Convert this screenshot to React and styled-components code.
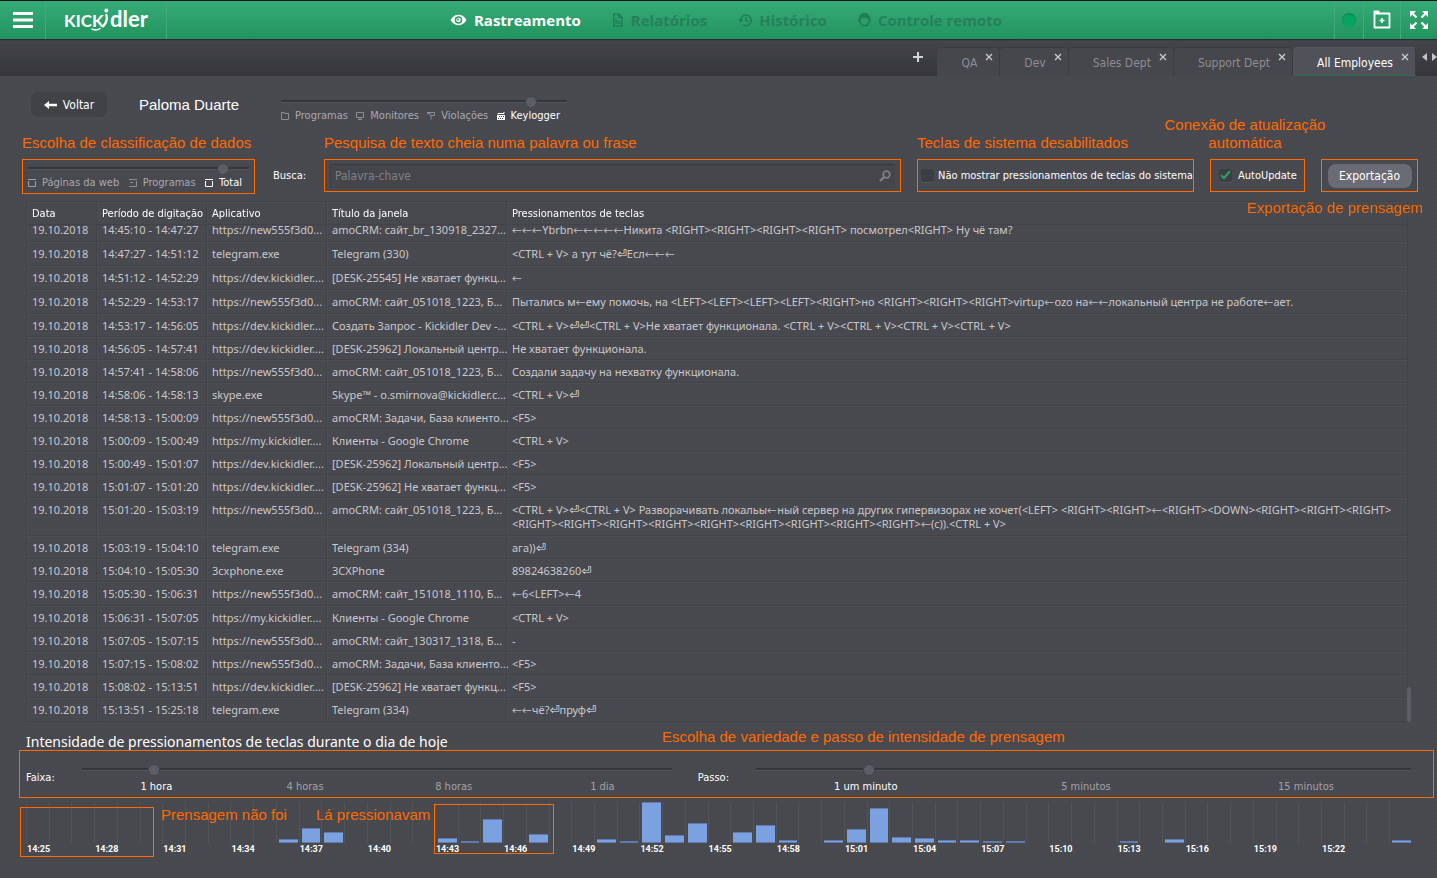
import React, { useLayoutEffect, useRef } from 'react'
import styled, { createGlobalStyle } from 'styled-components'

const orange = '#ff6a00'
const uiFont = '"DejaVu Sans Condensed", "Noto Sans", sans-serif'
const stripes = 'linear-gradient(135deg, #4a4a51 25%, #47474e 25% 50%, #4a4a51 50% 75%, #47474e 75%) 0 0 / 4px 4px'

const rows = [
    ['14:45:10 - 14:47:27', 'https://new555f3d0...', 'amoCRM: сайт_br_130918_2327...', '←←←Ybrbn←←←←←Никита <RIGHT><RIGHT><RIGHT><RIGHT> посмотрел<RIGHT> Ну чё там?'],
    ['14:47:27 - 14:51:12', 'telegram.exe', 'Telegram (330)', '<CTRL + V> а тут чё?⏎Есл←←←'],
    ['14:51:12 - 14:52:29', 'https://dev.kickidler....', '[DESK-25545] Не хватает функц...', '←'],
    ['14:52:29 - 14:53:17', 'https://new555f3d0...', 'amoCRM: сайт_051018_1223, Б...', 'Пытались м←ему помочь, на <LEFT><LEFT><LEFT><LEFT><RIGHT>но <RIGHT><RIGHT><RIGHT>virtup←ozo на←←локальный центра не работе←ает.'],
    ['14:53:17 - 14:56:05', 'https://dev.kickidler....', 'Создать Запрос - Kickidler Dev -...', '<CTRL + V>⏎⏎<CTRL + V>Не хватает функционала. <CTRL + V><CTRL + V><CTRL + V><CTRL + V>'],
    ['14:56:05 - 14:57:41', 'https://dev.kickidler....', '[DESK-25962] Локальный центр...', 'Не хватает функционала.'],
    ['14:57:41 - 14:58:06', 'https://new555f3d0...', 'amoCRM: сайт_051018_1223, Б...', 'Создали задачу на нехватку функционала.'],
    ['14:58:06 - 14:58:13', 'skype.exe', 'Skype™ - o.smirnova@kickidler.c...', '<CTRL + V>⏎'],
    ['14:58:13 - 15:00:09', 'https://new555f3d0...', 'amoCRM: Задачи, База клиенто...', '<F5>'],
    ['15:00:09 - 15:00:49', 'https://my.kickidler....', 'Клиенты - Google Chrome', '<CTRL + V>'],
    ['15:00:49 - 15:01:07', 'https://dev.kickidler....', '[DESK-25962] Локальный центр...', '<F5>'],
    ['15:01:07 - 15:01:20', 'https://dev.kickidler....', '[DESK-25962] Не хватает функц...', '<F5>'],
    ['15:01:20 - 15:03:19', 'https://new555f3d0...', 'amoCRM: сайт_051018_1223, Б...', '<CTRL + V>⏎<CTRL + V> Разворачивать локальы←ный сервер на других гипервизорах не хочет(<LEFT> <RIGHT><RIGHT>←<RIGHT><DOWN><RIGHT><RIGHT><RIGHT>\n<RIGHT><RIGHT><RIGHT><RIGHT><RIGHT><RIGHT><RIGHT><RIGHT><RIGHT>←(c)).<CTRL + V>'],
    ['15:03:19 - 15:04:10', 'telegram.exe', 'Telegram (334)', 'ага))⏎'],
    ['15:04:10 - 15:05:30', '3cxphone.exe', '3CXPhone', '89824638260⏎'],
    ['15:05:30 - 15:06:31', 'https://new555f3d0...', 'amoCRM: сайт_151018_1110, Б...', '←6<LEFT>←4'],
    ['15:06:31 - 15:07:05', 'https://my.kickidler....', 'Клиенты - Google Chrome', '<CTRL + V>'],
    ['15:07:05 - 15:07:15', 'https://new555f3d0...', 'amoCRM: сайт_130317_1318, Б...', '-'],
    ['15:07:15 - 15:08:02', 'https://new555f3d0...', 'amoCRM: Задачи, База клиенто...', '<F5>'],
    ['15:08:02 - 15:13:51', 'https://dev.kickidler....', '[DESK-25962] Не хватает функц...', '<F5>'],
    ['15:13:51 - 15:25:18', 'telegram.exe', 'Telegram (334)', '←←чё?⏎пруф⏎'],
]

// minute offset from 14:25 -> bar height
const bars = {
    11: 4, 12: 15, 13: 11, 18: 5, 19: 1, 20: 24, 22: 9, 25: 4, 26: 1, 27: 41,
    28: 8, 29: 20, 31: 11, 32: 18, 33: 3, 35: 3, 36: 14, 37: 35, 38: 6, 39: 5,
    40: 3, 41: 3, 42: 2, 43: 1, 48: 2, 50: 4, 60: 3,
}

const timeAt = (i) => {
    const total = 14 * 60 + 25 + i
    return `${Math.floor(total / 60)}:${String(total % 60).padStart(2, '0')}`
}

function Keys({ text }) {
    return text
        .split(/([←⏎]+)/)
        .map((part, i) => (i % 2 ? <Key key={i} $enter={part[0] === '⏎'}>{part}</Key> : part))
}

function KeyLog() {
    const scroller = useRef(null)
    useLayoutEffect(() => {
        scroller.current.scrollTop = scroller.current.scrollHeight
    }, [])
    return (
        <LogPanel>
            <LogScroller ref={scroller}>
                <LogTable>
                    <colgroup>
                        <Col $w={70} />
                        <Col $w={110} />
                        <Col $w={120} />
                        <Col $w={180} />
                        <col />
                    </colgroup>
                    <thead>
                        <tr>
                            <Th>Data</Th>
                            <Th>Período de digitação</Th>
                            <Th>Aplicativo</Th>
                            <Th>Título da janela</Th>
                            <Th>Pressionamentos de teclas</Th>
                        </tr>
                    </thead>
                    <tbody>
                        {rows.map(([period, app, title, keys]) => (
                            <Row key={period} $tall={keys.includes('←')}>
                                <td>19.10.2018</td>
                                <td>{period}</td>
                                <td>{app}</td>
                                <td>{title}</td>
                                <td><Keys text={keys} /></td>
                            </Row>
                        ))}
                    </tbody>
                </LogTable>
            </LogScroller>
            <ScrollThumb />
        </LogPanel>
    )
}

function Tab({ label, active }) {
    return (
        <TabItem $active={active}>
            <TabButton type="button" $active={active}>{label}</TabButton>
            <TabClose type="button" aria-label={`Fechar ${label}`}>
                <svg width="8" height="8" viewBox="0 0 8 8" stroke="#d0d0d2" strokeWidth="1.2">
                    <path d="M1 1l6 6M7 1L1 7" />
                </svg>
            </TabClose>
        </TabItem>
    )
}

const EyeIcon = () => (
    <svg width="17" height="12" viewBox="0 0 17 12">
        <path d="M.5 6C3 2 5.600.8 8.500.8S14 2 16.500 6C14 10 11.400 11.200 8.500 11.200S3 10 .5 6z" fill="#fff" />
        <circle cx="8.5" cy="6" r="3.8" fill="#2a9c6a" />
        <circle cx="8.5" cy="6" r="2.300" fill="#fff" />
        <circle cx="8" cy="5.500" r="1" fill="#2a9c6a" />
    </svg>
)

const ReportIcon = () => (
    <svg width="12" height="14" viewBox="0 0 12 14" fill="none" stroke="#1f7f56" strokeWidth="1.4">
        <path d="M1.700 1h5l3.300 3.300V13H1.700zM6.500 1v3.500H10" />
        <path d="M4 5v6M6 7v4M8 8v3" strokeWidth="1.2" />
    </svg>
)

const HistoryIcon = () => (
    <svg width="14" height="14" viewBox="0 0 14 14" fill="none" stroke="#1f7f56" strokeWidth="1.5">
        <path d="M2.600 7.500A5.300 5.300 0 1 1 5 11.800" />
        <path d="M8 4v3.500l2.300 1.300" />
        <path d="M0 6.500h5.200L2.600 9.800z" fill="#1f7f56" stroke="none" />
    </svg>
)

const OperatorIcon = () => (
    <svg width="13" height="14" viewBox="0 0 13 14" fill="none" stroke="#1f7f56" strokeWidth="1.4">
        <path d="M2 8V5.500a4.500 4.500 0 0 1 9 0V8c0 2.500-2 4.700-4.500 4.700S2 10.500 2 8z" />
        <path d="M2 5c2 0 3.500-.4 4.500-1C7.500 4.600 9 5 11 5V3.500L8.500 1h-4L2 3.500z" fill="#1f7f56" />
        <path d="M1 5.500v4M12 5.500v4M11 11l-3 2.300" />
    </svg>
)

const Logo = () => (
    <svg width="88" height="32" viewBox="0 0 88 32" role="img" aria-label="Kickidler">
        <LogoText x="0" y="23" fontSize="17">KICK</LogoText>
        <LogoText x="46" y="23" fontSize="22">dler</LogoText>
        <g fill="none" stroke="#fff" strokeLinecap="round">
            <circle cx="42.300" cy="6.500" r="2" fill="#fff" stroke="none" />
            <path d="M42.300 11c1.200 3.500 0 8-3.300 11.500" strokeWidth="2.300" />
            <path d="M36 24.500c-2 1.600-5 1.900-8 .6" strokeWidth="1.500" />
        </g>
    </svg>
)

const ModeIcon = ({ kind, color }) => (
    <svg width="8" height="8" viewBox="0 0 8 8" fill="none" stroke={color} strokeWidth="1">
        {kind === 'folder' && <path d="M.5 7.500V.5h3v1h4v6z" />}
        {kind === 'monitor' && <path d="M.5.5h7v5h-7zM4 5.500v2M2 7.500h4" />}
        {kind === 'alert' && <path d="M0 .5h7.500v3H4V7.500M0 1.500h3v2" />}
        {kind === 'keyboard' && (
            <>
                <path d="M1 2.500V1.500h6V0" />
                <path d="M0 3h8v5H0z" fill={color} stroke="none" />
                <path d="M2 4.500h1M4 4.500h1M6 4.500h1M1 6.500h1M3 6.500h1M5 6.500h1" stroke="#48484f" />
            </>
        )}
        {kind === 'box' && <path d="M0 .5h8M.5 2v5.500h7V2" />}
        {kind === 'half' && <path d="M0 .5h8M1 3.500h3M0 7.500h7.500V2" />}
    </svg>
)

function App() {
    return (
        <Page>
            <GlobalStyle />
            <Header>
                <HeaderButton type="button" aria-label="Menu" $w={45}>
                    <svg width="20" height="18" viewBox="0 0 20 18" fill="#fff">
                        <path d="M0 1h20v3H0zM0 7.500h20v3H0zM0 14h20v3H0z" />
                    </svg>
                </HeaderButton>
                <LogoCell><Logo /></LogoCell>
                <Nav>
                    <NavLink href="#tracking" $active><EyeIcon />Rastreamento</NavLink>
                    <NavLink href="#reports"><ReportIcon />Relatórios</NavLink>
                    <NavLink href="#history"><HistoryIcon />Histórico</NavLink>
                    <NavLink href="#remote"><OperatorIcon />Controle remoto</NavLink>
                </Nav>
                <HeaderButton type="button" aria-label="Status" $w={29} $line><StatusDot /></HeaderButton>
                <HeaderButton type="button" aria-label="Adicionar" $w={37} $line>
                    <svg width="18" height="20" viewBox="0 0 18 20" fill="none" stroke="#fff">
                        <path d="M1.500 3.500h15v14h-15z" strokeWidth="1.800" strokeLinejoin="round" />
                        <path d="M1 3V1h5v2" fill="#fff" strokeWidth="1" />
                        <path d="M9 8v5M6.500 10.500h5" strokeWidth="1.500" />
                    </svg>
                </HeaderButton>
                <HeaderButton type="button" aria-label="Tela cheia" $w={37} $line>
                    <svg width="18" height="18" viewBox="0 0 18 18" fill="#fff" stroke="#fff" strokeWidth="2.200">
                        <path d="M2 2l4.500 4.500M16 2l-4.500 4.500M2 16l4.500-4.500M16 16l-4.500-4.500" />
                        <path d="M0 0h6L0 6zM18 0h-6l6 6zM0 18h6l-6-6zM18 18h-6l6-6z" stroke="none" />
                    </svg>
                </HeaderButton>
            </Header>
            <TabBar>
                <AddTab type="button" aria-label="Nova aba">
                    <svg width="10" height="10" viewBox="0 0 10 10" stroke="#d4d4d6" strokeWidth="2">
                        <path d="M5 0v10M0 5h10" />
                    </svg>
                </AddTab>
                <Tab label="QA" />
                <Tab label="Dev" />
                <Tab label="Sales Dept" />
                <Tab label="Support Dept" />
                <Tab label="All Employees" active />
                <TabArrows type="button" aria-label="Rolar abas">
                    <svg width="15" height="8" viewBox="0 0 15 8" fill="#c4c4c8">
                        <path d="M5 0v8L0 4zM10 0v8l5-4z" />
                    </svg>
                </TabArrows>
            </TabBar>
            <Content>
                <PersonBar>
                    <BackButton type="button">
                        <svg width="13" height="8" viewBox="0 0 13 8" fill="#fff">
                            <path d="M0 4l5-4v2.700h8v2.600H5V8z" />
                        </svg>
                        Voltar
                    </BackButton>
                    <PersonName>Paloma Duarte</PersonName>
                    <ModeSlider>
                        <Range aria-label="Modo" max="1000" defaultValue="891" />
                        <Modes>
                            <Mode><ModeIcon kind="folder" color="#8c8d92" />Programas</Mode>
                            <Mode><ModeIcon kind="monitor" color="#8c8d92" />Monitores</Mode>
                            <Mode><ModeIcon kind="alert" color="#8c8d92" />Violações</Mode>
                            <Mode $active><ModeIcon kind="keyboard" color="#fff" />Keylogger</Mode>
                        </Modes>
                    </ModeSlider>
                </PersonBar>
                <FilterBar>
                    <Framed $w={233} $tall>
                        <FilterSlider>
                            <Range aria-label="Classificação" max="1000" defaultValue="904" />
                            <Modes>
                                <Mode><ModeIcon kind="box" color="#a0a0a4" />Páginas da web</Mode>
                                <Mode><ModeIcon kind="half" color="#8c8d92" />Programas</Mode>
                                <Mode $active><ModeIcon kind="box" color="#fff" />Total</Mode>
                            </Modes>
                        </FilterSlider>
                        <Note $side="above">Escolha de classificação de dados</Note>
                    </Framed>
                    <SearchGroup>
                        <SearchLabel htmlFor="search">Busca:</SearchLabel>
                        <Framed $grow>
                            <SearchBox>
                                <SearchInput id="search" type="text" placeholder="Palavra-chave" />
                                <svg width="12" height="12" viewBox="0 0 12 12" fill="none" stroke="#7e7f85">
                                    <circle cx="7.500" cy="4.500" r="3.300" strokeWidth="1.800" />
                                    <path d="M5 7L1 11" strokeWidth="2.400" />
                                </svg>
                            </SearchBox>
                            <Note $side="above">Pesquisa de texto cheia numa palavra ou frase</Note>
                        </Framed>
                    </SearchGroup>
                    <Framed $w={277}>
                        <CheckLabel>
                            <Checkbox />
                            Não mostrar pressionamentos de teclas do sistema
                        </CheckLabel>
                        <Note $side="above">Teclas de sistema desabilitados</Note>
                    </Framed>
                    <Framed $w={95}>
                        <CheckLabel $roomy>
                            <Checkbox defaultChecked />
                            AutoUpdate
                        </CheckLabel>
                        <CenteredNote $side="above">Conexão de atualização automática</CenteredNote>
                    </Framed>
                    <Framed $w={97}>
                        <ExportButton type="button">Exportação</ExportButton>
                        <Note $side="below">Exportação de prensagem</Note>
                    </Framed>
                </FilterBar>
                <KeyLog />
                <ChartTitle>Intensidade de pressionamentos de teclas durante o dia de hoje</ChartTitle>
                <RangeBar>
                    <RangeLabel htmlFor="span">Faixa:</RangeLabel>
                    <RangeGroup $grow={9}>
                        <Range id="span" max="1000" defaultValue="114" />
                        <Steps>
                            <Step $active>1 hora</Step>
                            <Step>4 horas</Step>
                            <Step>8 horas</Step>
                            <Step>1 dia</Step>
                        </Steps>
                    </RangeGroup>
                    <RangeLabel htmlFor="step" $second>Passo:</RangeLabel>
                    <RangeGroup $grow={10}>
                        <Range id="step" max="1000" defaultValue="166" />
                        <Steps>
                            <Step $active>1 um minuto</Step>
                            <Step>5 minutos</Step>
                            <Step>15 minutos</Step>
                        </Steps>
                    </RangeGroup>
                    <RangeNote $side="above">Escolha de variedade e passo de intensidade de prensagem</RangeNote>
                </RangeBar>
                <Chart>
                    {Array.from({ length: 61 }, (_, i) => (
                        <Slot key={i}>
                            <Track>{bars[i] && <Bar style={{ height: bars[i] }} />}</Track>
                            {i % 3 === 0 && i < 60 && <Time>{timeAt(i)}</Time>}
                        </Slot>
                    ))}
                    <ChartFrame $x={-6} $y={5} $w={134} />
                    <ChartNote $x={135}>Prensagem não foi</ChartNote>
                    <ChartNote $x={290}>Lá pressionavam</ChartNote>
                    <ChartFrame $x={408} $y={2} $w={120} />
                </Chart>
            </Content>
        </Page>
    )
}

const GlobalStyle = createGlobalStyle`
    body {
        margin: 0;
        background: #48484f;
    }
    *, *::before, *::after {
        box-sizing: border-box;
    }
    button {
        border: 0;
        padding: 0;
        background: none;
        font: inherit;
        color: inherit;
        cursor: pointer;
    }
    svg {
        flex: none;
        display: block;
    }
`

const Page = styled.div`
    display: flex;
    flex-direction: column;
    height: 100vh;
    min-height: 600px;
    overflow: hidden;
    background: ${stripes};
    color: #c9c9cc;
    font: 11px/14px ${uiFont};
`

const Header = styled.header`
    display: flex;
    height: 39px;
    flex: none;
    border-top: 1px solid #111214;
    background: linear-gradient(#37ab77, #21935f);
    box-shadow: 0 1px 1px #2c2d31;
    z-index: 1;
`

const HeaderButton = styled.button`
    display: flex;
    align-items: center;
    justify-content: center;
    width: ${(p) => p.$w}px;
    border-left: ${(p) => (p.$line ? '1px solid #41a97b' : '0')};
`

const LogoCell = styled.div`
    display: flex;
    align-items: center;
    width: 122px;
    padding-left: 18px;
    border: solid #41a97b;
    border-width: 0 1px;
`

const LogoText = styled.text`
    fill: #fff;
    font-family: Lato, sans-serif;
    font-weight: bold;
`

const Nav = styled.nav`
    display: flex;
    flex: 1;
    align-items: center;
    justify-content: center;
    gap: 31px;
    padding-right: 49px;
`

const NavLink = styled.a`
    display: flex;
    align-items: center;
    gap: 7px;
    font: bold 15px/20px "Open Sans", sans-serif;
    text-decoration: none;
    white-space: nowrap;
    color: ${(p) => (p.$active ? '#fff' : '#27805a')};
`

const StatusDot = styled.span`
    width: 14px;
    height: 14px;
    border-radius: 50%;
    background: #08a562;
    box-shadow: inset 0 1px 2px #08804c;
`

const TabBar = styled.div`
    display: flex;
    flex: none;
    align-items: flex-end;
    justify-content: flex-end;
    height: 37px;
    background: linear-gradient(#45464b, #35353a);
`

const AddTab = styled.button`
    padding: 0 14px 14px;
`

const TabItem = styled.div`
    position: relative;
    height: 29px;
    border-right: 1px solid #3c3d42;
    border-top: 1px solid ${(p) => (p.$active ? '#56575e' : '#3b3c41')};
    border-bottom: ${(p) => (p.$active ? '1px solid #2d6d52' : '0')};
    border-radius: 4px 4px 0 0;
    background: ${(p) => (p.$active ? '#505159' : '#46464d')};
`

const TabButton = styled.button`
    padding: 8px 22px 6px 24px;
    font-size: 12px;
    color: ${(p) => (p.$active ? '#fff' : '#8d8d92')};
`

const TabClose = styled.button`
    position: absolute;
    top: 5px;
    right: 6px;
`

const TabArrows = styled.button`
    padding: 0 0 15px 6px;
`

const Content = styled.main`
    display: flex;
    flex: 1;
    flex-direction: column;
    min-height: 0;
`

const PersonBar = styled.div`
    display: flex;
    height: 46px;
    flex: none;
    align-items: flex-start;
    padding: 16px 31px 0;
`

const BackButton = styled.button`
    display: flex;
    align-items: center;
    justify-content: center;
    gap: 6px;
    width: 76px;
    height: 25px;
    border-radius: 7px;
    background: #414246;
    color: #fff;
    font-size: 12px;
`

const PersonName = styled.h1`
    width: 142px;
    margin: 0 0 0 32px;
    font: 15px/25px "Liberation Sans", Arial, sans-serif;
    color: #fff;
    white-space: nowrap;
`

const ModeSlider = styled.div`
    width: 286px;
    padding-top: 4px;
`

const FilterSlider = styled.div`
    width: 221px;
    padding-top: 3px;
`

const Range = styled.input.attrs({ type: 'range' })`
    display: block;
    appearance: none;
    width: 100%;
    height: 12px;
    margin: 0;
    background: linear-gradient(#35363a, #35363a 2px, #55565c 2px) 0 4px / 100% 3px no-repeat;

    &::-webkit-slider-thumb {
        appearance: none;
        width: 12px;
        height: 12px;
        border: 1px solid #45464b;
        border-radius: 50%;
        background: #5d5e65;
    }
`

const Modes = styled.div`
    display: flex;
    justify-content: space-between;
    padding: 1px 7px 0 0;
`

const Mode = styled.span`
    display: flex;
    align-items: center;
    gap: 6px;
    white-space: nowrap;
    color: ${(p) => (p.$active ? '#fff' : '#a9a9ad')};
`

const FilterBar = styled.div`
    display: flex;
    flex: none;
    gap: 16px;
    height: 35px;
    margin: 37px 19px 7px 22px;
    color: #fff;
`

const Framed = styled.div`
    position: relative;
    display: flex;
    align-items: ${(p) => (p.$tall ? 'flex-start' : 'center')};
    justify-content: center;
    flex: ${(p) => (p.$grow ? '1' : 'none')};
    width: ${(p) => (p.$w ? `${p.$w}px` : 'auto')};
    height: ${(p) => (p.$tall ? 35 : 33)}px;
    border: 1px solid ${orange};
`

const Note = styled.span`
    position: absolute;
    ${(p) => (p.$side === 'above' ? 'bottom: calc(100% + 8px); left: -1px;' : 'top: calc(100% + 8px); right: -6px;')}
    font: 15px/18px "Liberation Sans", Arial, sans-serif;
    color: ${orange};
    white-space: nowrap;
    pointer-events: none;
    z-index: 3;
`

const CenteredNote = styled(Note)`
    left: -48px;
    width: 164px;
    text-align: center;
    white-space: normal;
`

const RangeNote = styled(Note)`
    left: 642px;
    bottom: calc(100% + 5px);
`

const SearchGroup = styled.div`
    display: flex;
    flex: 1;
`

const SearchLabel = styled.label`
    width: 53px;
    padding-left: 2px;
    line-height: 34px;
`

const SearchBox = styled.div`
    display: flex;
    flex: 1;
    align-items: center;
    height: 24px;
    margin: 0 5px;
    padding-right: 4px;
    border-top: 1px solid #38393d;
    border-left: 1px solid #404146;
    background: #45454b;
`

const SearchInput = styled.input`
    flex: 1;
    min-width: 0;
    padding: 0 4px;
    border: 0;
    background: none;
    font: 12px/14px ${uiFont};
    color: #fff;

    &::placeholder {
        color: #808186;
    }
`

const CheckLabel = styled.label`
    display: flex;
    flex: 1;
    align-items: center;
    gap: ${(p) => (p.$roomy ? 6 : 4)}px;
    padding-left: ${(p) => (p.$roomy ? 8 : 3)}px;
    white-space: nowrap;
`

const Checkbox = styled.input.attrs({ type: 'checkbox' })`
    appearance: none;
    position: relative;
    flex: none;
    width: 13px;
    height: 13px;
    margin: 0;
    border-radius: 3px;
    background: #3d3e43;
    box-shadow: 0 1px 0 #55565c;

    &:checked::after {
        content: '';
        position: absolute;
        top: 0;
        left: 4px;
        width: 5px;
        height: 10px;
        border: solid #25a56c;
        border-width: 0 2px 2px 0;
        transform: rotate(42deg);
    }
`

const ExportButton = styled.button`
    width: 84px;
    height: 24px;
    border-radius: 8px;
    background: #6a6b74;
    font-size: 12px;
`

const LogPanel = styled.section`
    position: relative;
    flex: 1;
    min-height: 0;
    margin: 0 25px 9px 26px;
`

const LogScroller = styled.div`
    height: 100%;
    overflow-y: auto;
    scrollbar-width: none;
`

const LogTable = styled.table`
    width: calc(100% - 4px);
    table-layout: fixed;
    border-spacing: 0;
    border-right: 1px solid #424349;

    td, th {
        padding: 5px 0 3px 5px;
        border-left: 1px solid #424349;
        border-bottom: 1px solid #424349;
        box-shadow: inset 1px 1px 0 #4e4e55;
        text-align: left;
        vertical-align: top;
        font: 11px/14px "Noto Sans", sans-serif;
        white-space: pre;
    }

    th {
        font-family: ${uiFont};
    }
`

const Col = styled.col`
    width: ${(p) => p.$w}px;
`

const Th = styled.th`
    position: sticky;
    top: 0;
    z-index: 1;
    border-top: 1px solid #424349;
    background: ${stripes};
    color: #fff;
`

const Row = styled.tr`
    && td {
        padding-bottom: ${(p) => (p.$tall ? 4 : 3)}px;
    }
`

const Key = styled.span`
    font-family: "DejaVu Sans", sans-serif;
    font-size: 12px;
    line-height: 1;
    color: ${(p) => (p.$enter ? '#f0f0f2' : '#b0b0b4')};
`

const ScrollThumb = styled.div`
    position: absolute;
    right: 1px;
    bottom: 0;
    width: 4px;
    height: 35px;
    border-radius: 2px;
    background: #5d5e65;
`

const ChartTitle = styled.h2`
    flex: none;
    height: 19px;
    margin: 0 26px;
    font: 14px/21px "Noto Sans", sans-serif;
    color: #fff;
`

const RangeBar = styled.div`
    position: relative;
    display: flex;
    flex: none;
    height: 48px;
    margin: 0 3px 4px 19px;
    padding: 13px 22px 0 6px;
    border: 1px solid ${orange};
`

const RangeLabel = styled.label`
    flex: none;
    width: ${(p) => (p.$second ? 84 : 56)}px;
    padding-left: ${(p) => (p.$second ? 26 : 0)}px;
    padding-top: 7px;
    color: #fff;
`

const RangeGroup = styled.div`
    flex: ${(p) => p.$grow} 1 0;
`

const Steps = styled.div`
    display: flex;
    margin-right: -5px;
    padding-top: 4px;
`

const Step = styled.span`
    flex: 1;
    text-align: center;
    color: ${(p) => (p.$active ? '#fff' : '#a3a3a7')};
`

const Chart = styled.div`
    position: relative;
    display: flex;
    flex: none;
    height: 76px;
    margin: 0 25px 0 26px;
`

const Slot = styled.div`
    flex: 1 1 0;
    min-width: 0;
`

const Track = styled.div`
    display: flex;
    align-items: flex-end;
    height: 41px;
    padding: 0 1px 0 2px;
    border-left: 1px solid #525259;
`

const Bar = styled.div`
    flex: 1;
    border: solid #5f7aab;
    border-width: 1px 0;
    background: #7ba1e1;
`

const Time = styled.div`
    padding-left: 1px;
    font: bold 9px/12px Roboto, sans-serif;
    color: #fff;
    white-space: nowrap;
`

const ChartFrame = styled.div`
    position: absolute;
    left: ${(p) => p.$x}px;
    top: ${(p) => p.$y}px;
    width: ${(p) => p.$w}px;
    height: 50px;
    border: 1px solid ${orange};
    pointer-events: none;
`

const ChartNote = styled.span`
    position: absolute;
    left: ${(p) => p.$x}px;
    top: 4px;
    font: 15px/18px "Liberation Sans", Arial, sans-serif;
    color: ${orange};
    white-space: nowrap;
`

export default App
